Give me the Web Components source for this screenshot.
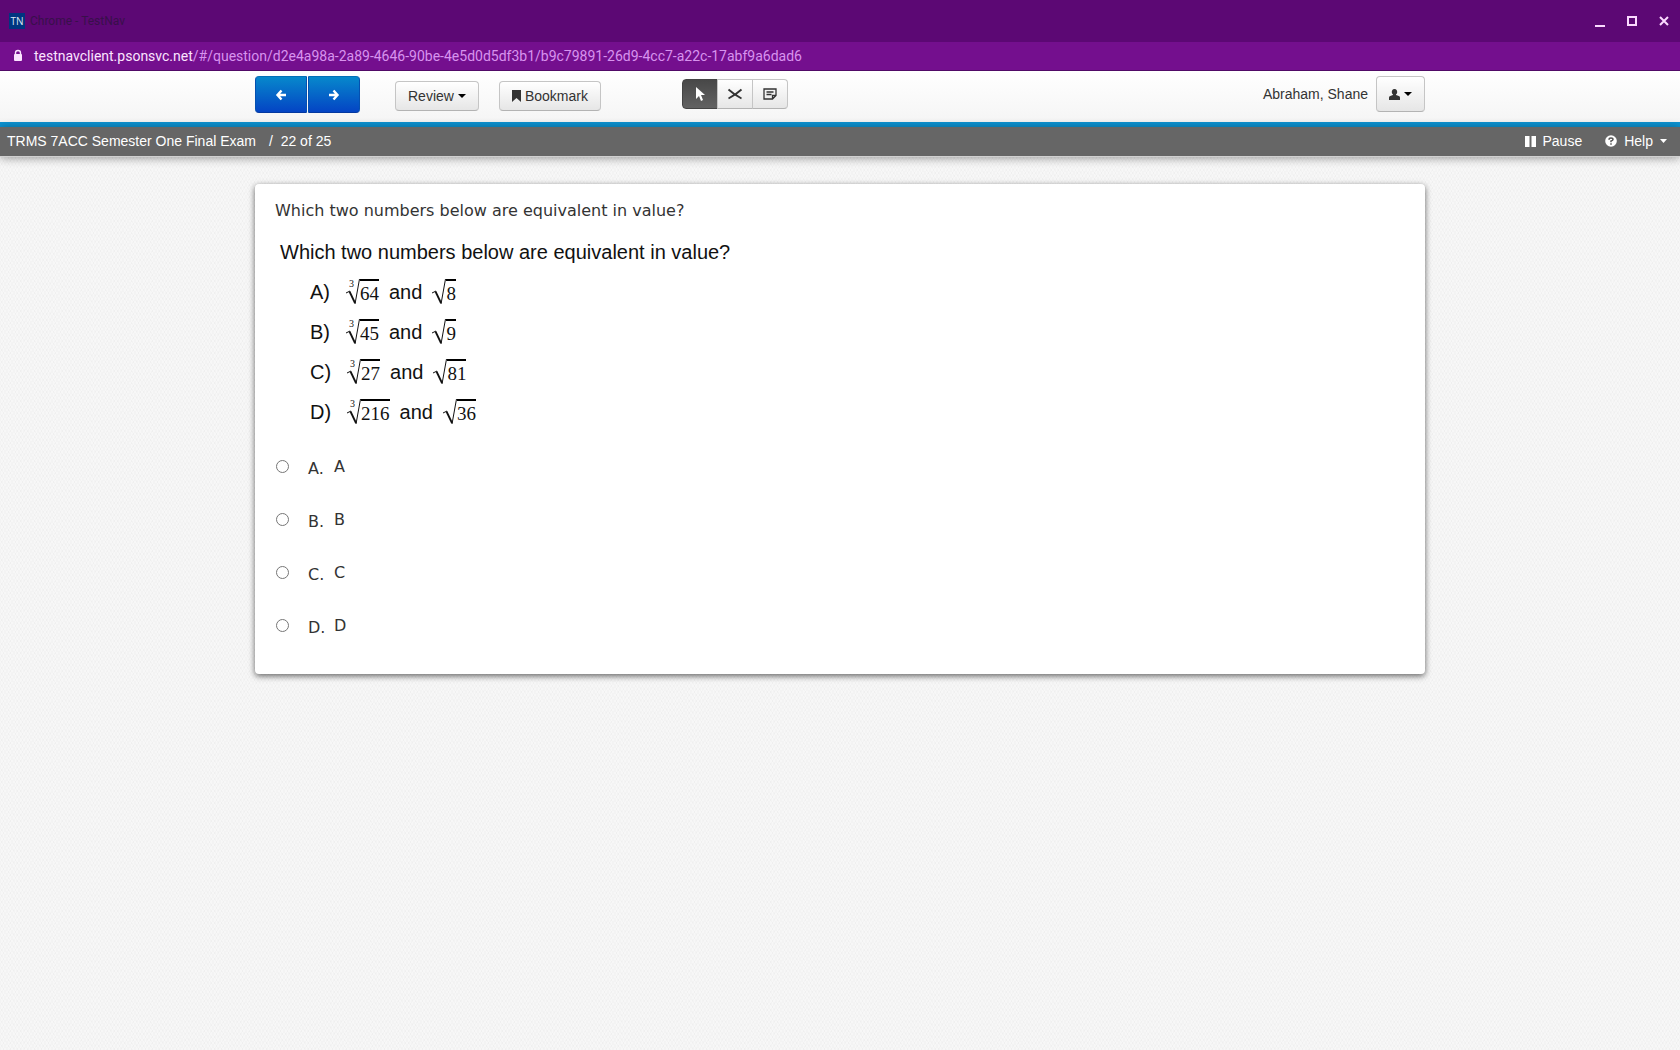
<!DOCTYPE html>
<html lang="en">
<head>
<meta charset="utf-8">
<meta name="viewport" content="width=device-width, initial-scale=1">
<title>Chrome - TestNav</title>
<style>
    :root {
        --content: 1170px;
        --ink: #333;
    }

    body {
        margin: 0;
        min-height: 100vh;
        font: 14px/20px "Liberation Sans", Arial, sans-serif;
        color: var(--ink);
        background-color: #f7f7f7;
        background-image:
            repeating-linear-gradient(60deg, rgb(0 0 0 / 0.015) 0 1px, transparent 1px 3px),
            repeating-linear-gradient(-60deg, rgb(0 0 0 / 0.015) 0 1px, transparent 1px 3px);
    }
</style>
</head>
<body>
<window-frame heading="Chrome - TestNav" host="testnavclient.psonsvc.net" path="/#/question/d2e4a98a-2a89-4646-90be-4e5d0d5df3b1/b9c79891-26d9-4cc7-a22c-17abf9a6dad6"></window-frame>
<test-toolbar user="Abraham, Shane"></test-toolbar>
<test-status position="22 of 25">TRMS 7ACC Semester One Final Exam</test-status>
<question-card>
    <span slot="prompt">Which two numbers below are equivalent in value?</span>
    <math-figure>
        <span slot="heading">Which two numbers below are equivalent in value?</span>
        <math-row letter="A" cube="64" square="8"></math-row>
        <math-row letter="B" cube="45" square="9"></math-row>
        <math-row letter="C" cube="27" square="81"></math-row>
        <math-row letter="D" cube="216" square="36"></math-row>
    </math-figure>
    <answer-list slot="answers" choices="A,B,C,D"></answer-list>
</question-card>

<script>
class WindowFrame extends HTMLElement {
    constructor() {
        super();
        this.attachShadow({ mode: 'open' });
    }

    connectedCallback() {
        this.shadowRoot.innerHTML = `
            <style>
                :host {
                    display: block;
                    font-family: Roboto, sans-serif;
                }

                .title, .address {
                    display: flex;
                    align-items: center;
                    box-sizing: border-box;
                }

                .title {
                    height: 42px;
                    padding: 0 8px 0 9px;
                    gap: 5px;
                    background: #5c0874;
                    color: #38104a;
                    font-size: 12px;
                }

                .badge {
                    width: 16px;
                    background: #003580;
                    color: #dce6f5;
                    font: 10px/16px "Open Sans", sans-serif;
                    text-align: center;
                }

                .controls {
                    display: flex;
                    gap: 16px;
                    margin-left: auto;
                }

                button {
                    display: block;
                    width: 16px;
                    height: 16px;
                    padding: 0;
                    border: 0;
                    background: none;
                }

                .controls svg {
                    display: block;
                    fill: none;
                    stroke: #fbd9ff;
                    stroke-width: 2;
                }

                .address {
                    height: 29px;
                    padding: 0 12px;
                    gap: 10px;
                    background: #740f8e;
                    border-bottom: 1px solid #500a66;
                    color: #d893ee;
                    font-size: 14px;
                }

                b {
                    font-weight: 400;
                    color: #fbe4ff;
                }
            </style>
            <div class="title">
                <span class="badge">TN</span>
                <span>${this.getAttribute('heading')}</span>
                <div class="controls">
                    <button aria-label="Minimize"><svg width="16" height="16"><path d="M3 13h10" /></svg></button>
                    <button aria-label="Maximize"><svg width="16" height="16"><rect x="4" y="4" width="8" height="8" /></svg></button>
                    <button aria-label="Close"><svg width="16" height="16"><path d="M4 4l8 8M12 4l-8 8" /></svg></button>
                </div>
            </div>
            <div class="address">
                <svg width="12" height="14" viewBox="0 0 12 14">
                    <path d="M3.500 6V4a2.500 2.500 0 0 1 5 0v2" fill="none" stroke="#fbe4ff" stroke-width="1.400" />
                    <rect x="2" y="5" width="8" height="7" rx="1" fill="#fbe4ff" />
                </svg>
                <span><b>${this.getAttribute('host')}</b>${this.getAttribute('path')}</span>
            </div>
        `;
    }
}

class TestToolbar extends HTMLElement {
    constructor() {
        super();
        this.attachShadow({ mode: 'open' });
    }

    connectedCallback() {
        this.shadowRoot.innerHTML = `
            <style>
                :host {
                    display: block;
                    background: linear-gradient(#fff, #f5f5f5);
                    border-bottom: 5px solid #0d93d2;
                }

                .bar {
                    display: flex;
                    align-items: flex-start;
                    box-sizing: border-box;
                    max-width: var(--content);
                    height: 51px;
                    margin: 0 auto;
                    padding-top: 5px;
                }

                button {
                    display: flex;
                    align-items: center;
                    justify-content: center;
                    box-sizing: border-box;
                    height: 30px;
                    margin: 0;
                    padding: 0 12px;
                    gap: 4px;
                    border: 1px solid #c5c5c5;
                    border-bottom-color: #b3b3b3;
                    border-radius: 4px;
                    background: linear-gradient(#fff, #e6e6e6);
                    color: var(--ink);
                    font: inherit;
                }

                svg {
                    display: block;
                }

                .group {
                    display: flex;
                }

                .group button {
                    border-radius: 0;
                }

                .group button:first-child {
                    border-radius: 4px 0 0 4px;
                }

                .group button:last-child {
                    border-radius: 0 4px 4px 0;
                }

                .nav {
                    gap: 1px;
                    margin-right: 35px;
                }

                .nav button {
                    width: 52px;
                    height: 37px;
                    border-color: #0470b8 #0450b0 #0338a0;
                    background: linear-gradient(#0788cc, #0444c4);
                }

                .plain {
                    display: flex;
                    gap: 20px;
                    padding-top: 5px;
                    margin-right: 81px;
                }

                .tools {
                    padding-top: 3px;
                }

                .tools button {
                    width: 36px;
                    padding: 0;
                }

                .tools button + button {
                    margin-left: -1px;
                }

                .tools .on {
                    border-color: #444;
                    background: linear-gradient(#484848, #626262);
                }

                .user {
                    display: flex;
                    align-items: center;
                    gap: 8px;
                    margin-left: auto;
                }

                .user button {
                    height: 36px;
                }
            </style>
            <div class="bar">
                <div class="group nav">
                    <button aria-label="Previous question"><svg width="12" height="12" fill="none" stroke="#fff" stroke-width="2.400"><path d="M6.500 1.500L2.500 6l4 4.500M2.500 6H11" /></svg></button>
                    <button aria-label="Next question"><svg width="12" height="12" fill="none" stroke="#fff" stroke-width="2.400"><path d="M5.500 1.500L9.500 6l-4 4.500M9.500 6H1" /></svg></button>
                </div>
                <div class="plain">
                    <button>Review <svg width="8" height="4"><path d="M0 0h8L4 4z" fill="#000" /></svg></button>
                    <button><svg width="9" height="12"><path d="M0 0h9v12L4.500 8L0 12z" fill="#333" /></svg> Bookmark</button>
                </div>
                <div class="group tools">
                    <button class="on" aria-label="Pointer"><svg width="16" height="16"><path d="M4 1v12l3-3 2 5 2-1-2-5h4z" fill="#fff" /></svg></button>
                    <button aria-label="Answer eliminator"><svg width="16" height="16" fill="none" stroke="#333" stroke-width="1.800"><path d="M1.500 3.500Q7 8.500 14.500 12.500M14.500 3.500Q9 8.500 1.500 12.500" /></svg></button>
                    <button aria-label="Notepad"><svg width="16" height="16" fill="none" stroke="#333" stroke-width="1.300"><path d="M2 3h12v6.500L10.500 13H2zM10.500 13V9.500H14M4.500 6h7M4.500 8.500h5" /></svg></button>
                </div>
                <div class="user">
                    <span>${this.getAttribute('user')}</span>
                    <button aria-label="Account menu">
                        <svg width="11" height="11"><path d="M5.500 0C3.500 0 2.800 1.500 2.800 3c0 1 .5 2 1.200 2.500v.5C2 6.500 0 7 0 8.500V11h11V8.500C11 7 9 6.500 7 6v-.5C7.700 5 8.200 4 8.200 3c0-1.500-.7-3-2.700-3z" fill="#333" /></svg>
                        <svg width="8" height="4"><path d="M0 0h8L4 4z" fill="#000" /></svg>
                    </button>
                </div>
            </div>
        `;
    }
}

class TestStatus extends HTMLElement {
    constructor() {
        super();
        this.attachShadow({ mode: 'open' });
    }

    connectedCallback() {
        this.shadowRoot.innerHTML = `
            <style>
                :host {
                    display: flex;
                    align-items: center;
                    padding: 4px 13px 5px 7px;
                    background: #666;
                    border-bottom: 1px solid #d0d0d0;
                    box-shadow: 0 1px 10px rgb(0 0 0 / 0.4);
                    color: #fff;
                }

                .position {
                    margin-left: 13px;
                }

                .actions {
                    display: flex;
                    gap: 23px;
                    margin-left: auto;
                }

                button {
                    display: flex;
                    align-items: center;
                    gap: 7px;
                    padding: 0;
                    border: 0;
                    background: none;
                    color: inherit;
                    font: inherit;
                }
            </style>
            <span><slot></slot></span>
            <span class="position">/&nbsp; ${this.getAttribute('position')}</span>
            <div class="actions">
                <button><svg width="11" height="11"><path d="M0 0h4.500v11H0zM6.500 0H11v11H6.500z" fill="#fff" /></svg>Pause</button>
                <button>
                    <svg width="12" height="12" fill="none">
                        <circle cx="6" cy="6" r="5.800" fill="#fff" />
                        <path d="M4 4.700Q4 3 6 3t2 1.500Q8 5.500 6 6v1.200M6 8.200v1.600" stroke="#555" stroke-width="1.500" />
                    </svg>
                    Help
                    <svg width="7" height="4"><path d="M0 0h7L3.500 4z" fill="#fff" /></svg>
                </button>
            </div>
        `;
    }
}

class QuestionCard extends HTMLElement {
    constructor() {
        super();
        this.attachShadow({ mode: 'open' });
        this.shadowRoot.innerHTML = `
            <style>
                :host {
                    display: block;
                    box-sizing: border-box;
                    max-width: var(--content);
                    margin: 27px auto;
                    padding: 17px 20px 22px;
                    border-radius: 4px;
                    background: #fff;
                    box-shadow: 0 2px 6px rgb(0 0 0 / 0.6);
                    font: 16px/20px "DejaVu Sans", Verdana, sans-serif;
                }

                p {
                    margin: 0 0 19px;
                }
            </style>
            <p><slot name="prompt"></slot></p>
            <slot></slot>
            <slot name="answers"></slot>
        `;
    }
}

class MathFigure extends HTMLElement {
    constructor() {
        super();
        this.attachShadow({ mode: 'open' });
        this.shadowRoot.innerHTML = `
            <style>
                :host {
                    display: block;
                    padding-left: 5px;
                    margin-bottom: 8px;
                    color: #111;
                    font: 20px/24px "Liberation Sans", Arial, sans-serif;
                }

                .rows {
                    padding: 8px 0 0 30px;
                }
            </style>
            <slot name="heading"></slot>
            <div class="rows"><slot></slot></div>
        `;
    }
}

class RootSign extends HTMLElement {
    constructor() {
        super();
        this.attachShadow({ mode: 'open' });
    }

    connectedCallback() {
        const index = this.getAttribute('index');
        this.shadowRoot.innerHTML = `
            <style>
                :host {
                    display: flex;
                    position: relative;
                    height: 26px;
                    font: 19px/26px "Liberation Serif", "Times New Roman", serif;
                }

                .index {
                    position: absolute;
                    left: 3px;
                    top: 0;
                    font-size: 10px;
                    line-height: 10px;
                }

                .radicand {
                    border-top: 2px solid #000;
                }
            </style>
            ${index ? `<span class="index">${index}</span>` : ''}
            <svg width="14" height="26" fill="none" stroke="#111">
                <path d="M0 14l4-2" />
                <path d="M3.500 12.500L9 24" stroke-width="1.800" />
                <path d="M9 25L13.500 0" />
            </svg>
            <span class="radicand"><slot></slot></span>
        `;
    }
}

class MathRow extends HTMLElement {
    constructor() {
        super();
        this.attachShadow({ mode: 'open' });
    }

    connectedCallback() {
        this.shadowRoot.innerHTML = `
            <style>
                :host {
                    display: flex;
                    align-items: center;
                    height: 40px;
                }

                .letter {
                    margin-right: 16px;
                }

                .and {
                    margin: 0 10px;
                }
            </style>
            <span class="letter">${this.getAttribute('letter')})</span>
            <root-sign index="3">${this.getAttribute('cube')}</root-sign>
            <span class="and">and</span>
            <root-sign>${this.getAttribute('square')}</root-sign>
        `;
    }
}

class AnswerList extends HTMLElement {
    constructor() {
        super();
        this.attachShadow({ mode: 'open' });
    }

    connectedCallback() {
        const choices = this.getAttribute('choices').split(',');
        this.shadowRoot.innerHTML = `
            <style>
                :host {
                    display: block;
                }

                .choice {
                    display: grid;
                    grid-template-columns: 33px 26px 1fr;
                    align-items: center;
                    height: 53px;
                }

                .choice label {
                    display: contents;
                }

                input {
                    width: 13px;
                    height: 13px;
                    margin: 0 0 0 1px;
                }

                .key {
                    padding-top: 4px;
                }
            </style>
            ${choices.map((choice) => `
                <div class="choice">
                    <input type="radio" name="answer" id="choice-${choice}">
                    <label for="choice-${choice}"><span class="key">${choice}.</span><span>${choice}</span></label>
                </div>
            `).join('')}
        `;
    }
}

customElements.define('window-frame', WindowFrame);
customElements.define('test-toolbar', TestToolbar);
customElements.define('test-status', TestStatus);
customElements.define('question-card', QuestionCard);
customElements.define('math-figure', MathFigure);
customElements.define('root-sign', RootSign);
customElements.define('math-row', MathRow);
customElements.define('answer-list', AnswerList);
</script>
</body>
</html>
